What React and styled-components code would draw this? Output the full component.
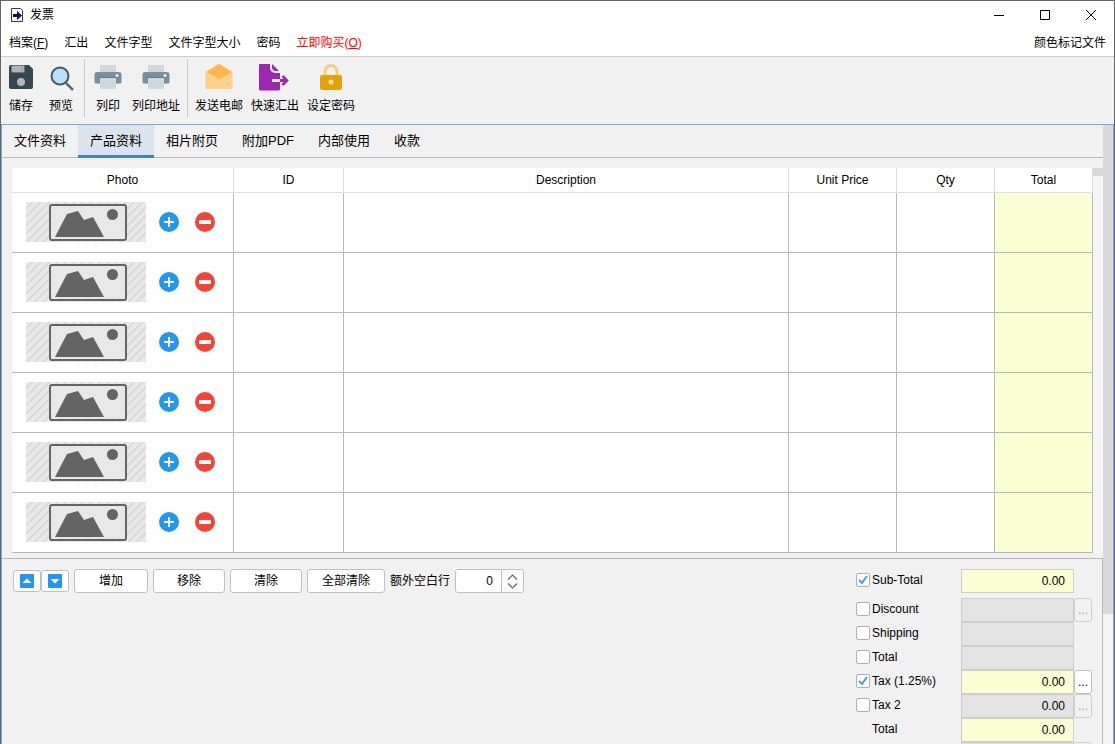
import React, { useState } from "react";
import styled, { createGlobalStyle } from "styled-components";

const MENUS = [
  { text: "档案", hotkey: "F" },
  { text: "汇出" },
  { text: "文件字型" },
  { text: "文件字型大小" },
  { text: "密码" },
  { text: "立即购买", hotkey: "O", highlight: true },
];

const TABS = ["文件资料", "产品资料", "相片附页", "附加PDF", "内部使用", "收款"];

const COLUMNS = [
  { name: "Photo", width: "222px" },
  { name: "ID", width: "110px" },
  { name: "Description" },
  { name: "Unit Price", width: "108px" },
  { name: "Qty", width: "98px" },
  { name: "Total", width: "98px" },
];

const TOTALS = [
  { id: "subtotal", label: "Sub-Total", check: true, checked: true, value: "0.00", active: true },
  { id: "discount", label: "Discount", check: true, value: "", more: true },
  { id: "shipping", label: "Shipping", check: true, value: "" },
  { id: "total1", label: "Total", check: true, value: "" },
  { id: "tax1", label: "Tax (1.25%)", check: true, checked: true, value: "0.00", active: true, more: true },
  { id: "tax2", label: "Tax 2", check: true, value: "0.00", more: true },
  { id: "total2", label: "Total", value: "0.00", active: true },
  { id: "deposit", label: "", value: "", more: true },
];

const AppIcon = () => (
  <svg width="14" height="16" viewBox="0 0 14 16">
    <path d="M1.5 1.5h9l2 2v11h-11z" fill="#fff" stroke="#33336b" />
    <path d="M2 9h10v5H2z" fill="#fbf7c4" />
    <path d="M3 7h4V4l5 4.500-5 4.500v-3H3z" fill="#0b0b5e" />
  </svg>
);

const SaveIcon = () => (
  <svg width="28" height="28" viewBox="0 0 28 28">
    <path d="M4 2h18l4 4v18a2 2 0 0 1-2 2H4a2 2 0 0 1-2-2V4a2 2 0 0 1 2-2z" fill="#37474f" />
    <path d="M4 2h14v8H6a2 2 0 0 1-2-2z" fill="#26343a" />
    <path d="M4.500 2.500h13v7h-13z" fill="#b0b4b6" />
    <path d="M14 4h2v4h-2z" fill="#9da3a6" />
    <circle cx="14" cy="19" r="4" fill="#b4b7b9" />
  </svg>
);

const PreviewIcon = () => (
  <svg width="28" height="28" viewBox="0 0 28 28">
    <path d="M19 20l7 7" stroke="#546e7a" strokeWidth="2.500" />
    <circle cx="13" cy="13" r="8.500" fill="#bbdefb" stroke="#455a64" strokeWidth="2" />
  </svg>
);

const PrintIcon = () => (
  <svg width="28" height="28" viewBox="0 0 28 28">
    <path d="M6 2h16v8H6z" fill="#cfd8dc" />
    <path d="M3 9h22a2.500 2.500 0 0 1 2.500 2.500V19a1.500 1.500 0 0 1-1.500 1.500H2A1.500 1.500 0 0 1 .5 19v-7.500A2.500 2.500 0 0 1 3 9z" fill="#78909c" />
    <circle cx="23" cy="12.500" r="1.500" fill="#e8f0f3" />
    <path d="M6 15h16v11H6z" fill="#cfd8dc" />
    <path d="M5 14h18v1H5z" fill="#607d8b" />
  </svg>
);

const MailIcon = () => (
  <svg width="28" height="28" viewBox="0 0 28 28">
    <path d="M.5 9L14 1l13.500 8v15a2 2 0 0 1-2 2h-23a2 2 0 0 1-2-2z" fill="#ffd08a" />
    <path d="M14 1l13 8-13 7L1 9z" fill="#ffb74d" />
  </svg>
);

const ExportIcon = () => (
  <svg width="32" height="28" viewBox="0 0 32 28">
    <path d="M1 1h10v4a5 5 0 0 0 5 5h5v6h-8v3h8v7a1.500 1.500 0 0 1-1.500 1.500h-18A1.500 1.500 0 0 1 0 26V2a1 1 0 0 1 1-1z" fill="#9c27b0" />
    <path d="M13 1l7 7h-3a4 4 0 0 1-4-4z" fill="#9c27b0" />
    <path d="M21 17.500h6" stroke="#9c27b0" strokeWidth="3" />
    <path d="M23.500 13l4.500 4.500-4.500 4.500" fill="none" stroke="#9c27b0" strokeWidth="2.500" />
  </svg>
);

const LockIcon = () => (
  <svg width="28" height="28" viewBox="0 0 28 28">
    <path d="M8 13V8.500a6 6 0 0 1 12 0V13" fill="none" stroke="#f3d07c" strokeWidth="3" />
    <path d="M5 12h18a2 2 0 0 1 2 2v11a2 2 0 0 1-2 2H5a2 2 0 0 1-2-2V14a2 2 0 0 1 2-2z" fill="#e2a20c" />
    <circle cx="14" cy="19" r="2.500" fill="#f3dfae" />
  </svg>
);

const PhotoPlaceholder = () => (
  <svg width="78" height="38" viewBox="0 0 78 38">
    <rect x="1" y="2" width="76" height="35" rx="2" fill="#e8e8e8" stroke="#646464" strokeWidth="2" />
    <path d="M6 34L18 11l11-3 6 9 9-3 11 20z" fill="#646464" />
    <circle cx="63.500" cy="11.500" r="5.500" fill="#646464" />
  </svg>
);

const AddIcon = () => (
  <svg width="20" height="20" viewBox="0 0 20 20">
    <circle cx="10" cy="10" r="10" fill="#2196f3" />
    <path d="M5 10h10M10 5v10" stroke="#fff" strokeWidth="2" />
  </svg>
);

const RemoveIcon = () => (
  <svg width="20" height="20" viewBox="0 0 20 20">
    <circle cx="10" cy="10" r="10" fill="#f44336" />
    <path d="M4 10h12" stroke="#fff" strokeWidth="4" />
  </svg>
);

const MoveIcon = ({ down }) => (
  <svg width="14" height="14" viewBox="0 0 14 14">
    <rect width="14" height="14" rx="1" fill="#2196f3" />
    <path d={down ? "M2.500 5h9L7 9.500z" : "M2.500 9h9L7 4.500z"} fill="#fff" />
  </svg>
);

const TOOLS = [
  [
    { label: "储存", icon: <SaveIcon /> },
    { label: "预览", icon: <PreviewIcon /> },
  ],
  [
    { label: "列印", icon: <PrintIcon /> },
    { label: "列印地址", icon: <PrintIcon /> },
  ],
  [
    { label: "发送电邮", icon: <MailIcon /> },
    { label: "快速汇出", icon: <ExportIcon /> },
    { label: "设定密码", icon: <LockIcon /> },
  ],
];

const App = () => {
  const [activeTab, setActiveTab] = useState(1);
  const [extraRows, setExtraRows] = useState(0);
  const [checks, setChecks] = useState(
    Object.fromEntries(TOTALS.map((t) => [t.id, !!t.checked]))
  );

  const toggleCheck = (id) => setChecks({ ...checks, [id]: !checks[id] });

  return (
    <>
      <GlobalStyle />
      <Window>
        <TitleBar>
          <AppIcon />
          <Title>发票</Title>
          <WindowButtons>
            <WindowButton aria-label="最小化">
              <svg width="12" height="12" viewBox="0 0 12 12">
                <path d="M1 6.500h10" stroke="#000" />
              </svg>
            </WindowButton>
            <WindowButton aria-label="最大化">
              <svg width="12" height="12" viewBox="0 0 12 12">
                <path d="M1.500 1.500h9v9h-9z" fill="none" stroke="#000" />
              </svg>
            </WindowButton>
            <WindowButton aria-label="关闭">
              <svg width="12" height="12" viewBox="0 0 12 12">
                <path d="M1 1l10 10M11 1L1 11" stroke="#000" />
              </svg>
            </WindowButton>
          </WindowButtons>
        </TitleBar>

        <MenuBar>
          {MENUS.map((menu) => (
            <MenuItem key={menu.text} $highlight={menu.highlight}>
              {menu.text}
              {menu.hotkey && (
                <>
                  (<u>{menu.hotkey}</u>)
                </>
              )}
            </MenuItem>
          ))}
          <MenuSpacer />
          <MenuItem>颜色标记文件</MenuItem>
        </MenuBar>

        <Toolbar>
          {TOOLS.map((group, index) => (
            <ToolGroup key={index}>
              {group.map((tool) => (
                <ToolButton key={tool.label} $wide={tool.label.length > 2}>
                  {tool.icon}
                  <span>{tool.label}</span>
                </ToolButton>
              ))}
            </ToolGroup>
          ))}
        </Toolbar>

        <Body>
          <Main>
            <TabBar>
              {TABS.map((tab, index) => (
                <Tab
                  key={tab}
                  $active={index === activeTab}
                  onClick={() => setActiveTab(index)}
                >
                  {tab}
                </Tab>
              ))}
            </TabBar>

            <TableArea>
              <Table>
                <colgroup>
                  {COLUMNS.map((col) => (
                    <Col key={col.name} $width={col.width} />
                  ))}
                </colgroup>
                <thead>
                  <tr>
                    {COLUMNS.map((col) => (
                      <HeadCell key={col.name}>{col.name}</HeadCell>
                    ))}
                  </tr>
                </thead>
                <tbody>
                  {[0, 1, 2, 3, 4, 5].map((row) => (
                    <tr key={row}>
                      <Cell>
                        <PhotoCell>
                          <Photo>
                            <PhotoPlaceholder />
                          </Photo>
                          <RoundButton aria-label="增加">
                            <AddIcon />
                          </RoundButton>
                          <RoundButton aria-label="移除">
                            <RemoveIcon />
                          </RoundButton>
                        </PhotoCell>
                      </Cell>
                      <Cell />
                      <Cell />
                      <Cell />
                      <Cell />
                      <Cell $total />
                    </tr>
                  ))}
                </tbody>
              </Table>
              <TableScroll>
                <TableThumb />
              </TableScroll>
            </TableArea>

            <BottomPanel>
              <Actions>
                <MoveButtons>
                  <MoveButton aria-label="上移">
                    <MoveIcon />
                  </MoveButton>
                  <MoveButton aria-label="下移">
                    <MoveIcon down />
                  </MoveButton>
                </MoveButtons>
                <Button $width="74px">增加</Button>
                <Button $width="72px">移除</Button>
                <Button $width="72px">清除</Button>
                <Button $width="78px">全部清除</Button>
                <label htmlFor="extra-rows">额外空白行</label>
                <Spinner>
                  <SpinnerInput
                    id="extra-rows"
                    value={extraRows}
                    onChange={(e) => setExtraRows(Number(e.target.value) || 0)}
                  />
                  <SpinnerArrows>
                    <SpinnerArrow
                      aria-label="加一"
                      onClick={() => setExtraRows(extraRows + 1)}
                    >
                      <svg width="11" height="6" viewBox="0 0 11 6">
                        <path d="M1 5.500l4.500-4.500L10 5.500" fill="none" stroke="#666" strokeWidth="1.200" />
                      </svg>
                    </SpinnerArrow>
                    <SpinnerArrow
                      aria-label="减一"
                      onClick={() => setExtraRows(Math.max(0, extraRows - 1))}
                    >
                      <svg width="11" height="6" viewBox="0 0 11 6">
                        <path d="M1 .5L5.500 5 10 .5" fill="none" stroke="#666" strokeWidth="1.200" />
                      </svg>
                    </SpinnerArrow>
                  </SpinnerArrows>
                </Spinner>
              </Actions>

              <Totals>
                {TOTALS.map((item) => (
                  <TotalRow key={item.id}>
                    <TotalLabel htmlFor={item.check ? item.id : `${item.id}-value`}>
                      {item.check ? (
                        <CheckBox
                          type="checkbox"
                          id={item.id}
                          checked={checks[item.id]}
                          onChange={() => toggleCheck(item.id)}
                        />
                      ) : (
                        <CheckSpace />
                      )}
                      {item.label}
                    </TotalLabel>
                    <TotalField
                      id={`${item.id}-value`}
                      aria-label={item.label || "Deposit"}
                      readOnly
                      value={item.value}
                      $active={item.active}
                    />
                    {item.more && (
                      <MoreButton aria-label="更多" disabled={!item.active}>
                        {item.label && "..."}
                      </MoreButton>
                    )}
                  </TotalRow>
                ))}
              </Totals>
            </BottomPanel>
          </Main>
          <PageScroll>
            <PageThumb />
          </PageScroll>
        </Body>
      </Window>
    </>
  );
};

export default App;

const GlobalStyle = createGlobalStyle`
  * {
    box-sizing: border-box;
  }

  body {
    margin: 0;
    background: #f1f1f1;
    color: #000;
    font: 12px/16px "Liberation Sans", "Noto Sans CJK SC", sans-serif;
  }

  button, input {
    margin: 0;
    padding: 0;
    font: inherit;
    color: inherit;
  }

  button {
    border: none;
    background: none;
    white-space: nowrap;
  }

  svg {
    display: block;
    flex-shrink: 0;
  }
`;

const Window = styled.div`
  height: 100vh;
  display: flex;
  flex-direction: column;
  overflow: hidden;
  border: 1px solid #666;
  border-bottom: none;
`;

const TitleBar = styled.header`
  height: 28px;
  flex-shrink: 0;
  display: flex;
  align-items: center;
  gap: 6px;
  padding-left: 9px;
  background: #fff;
`;

const Title = styled.span`
  flex: 1;
`;

const WindowButtons = styled.div`
  display: flex;
  height: 100%;
`;

const WindowButton = styled.button`
  width: 46px;
  display: flex;
  align-items: center;
  justify-content: center;
`;

const MenuBar = styled.nav`
  height: 28px;
  flex-shrink: 0;
  display: flex;
  align-items: center;
  gap: 16px;
  padding: 0 8px;
  background: #fff;
  border-bottom: 1px solid #ccc;
`;

const MenuItem = styled.button`
  color: ${({ $highlight }) => ($highlight ? "#f00" : "#000")};
`;

const MenuSpacer = styled.div`
  flex: 1;
`;

const Toolbar = styled.div`
  height: 67px;
  flex-shrink: 0;
  display: flex;
  padding: 2px 0 7px;
`;

const ToolGroup = styled.div`
  display: flex;

  & + & {
    margin-left: 3px;
    padding-left: 3px;
    border-left: 1px solid #ccc;
  }
`;

const ToolButton = styled.button`
  display: flex;
  flex-direction: column;
  align-items: center;
  gap: 7px;
  padding: 4px ${({ $wide }) => ($wide ? "4px" : "8px")} 0;

  svg {
    margin: 0 -2px;
  }
`;

const Body = styled.div`
  flex: 1;
  min-height: 0;
  display: flex;
  border: 1px solid #7da7d9;
  border-bottom: none;
`;

const Main = styled.main`
  flex: 1;
  min-width: 0;
  display: flex;
  flex-direction: column;
`;

const TabBar = styled.div`
  flex-shrink: 0;
  height: 33px;
  display: flex;
  border-bottom: 1px solid #b9b9b9;
`;

const Tab = styled.button`
  height: 33px;
  padding: 2px 12px 0;
  font-size: 13px;
  border-bottom: 3px solid ${({ $active }) => ($active ? "#3f81ca" : "transparent")};
  background: ${({ $active }) => ($active ? "#dae4ed" : "transparent")};
`;

const TableArea = styled.div`
  flex-shrink: 0;
  display: flex;
  padding: 10px 0 5px 10px;
`;

const Table = styled.table`
  flex: 1;
  table-layout: fixed;
  border-spacing: 0;
  background: #fff;
`;

const Col = styled.col`
  width: ${({ $width }) => $width || "auto"};
`;

const HeadCell = styled.th`
  height: 25px;
  padding: 0;
  font-weight: normal;
  border-right: 1px solid #e0e0e0;
  border-bottom: 1px solid #e0e0e0;
`;

const Cell = styled.td`
  height: 60px;
  padding: 0;
  border-right: 1px solid #b9b9b9;
  border-bottom: 1px solid #b9b9b9;
  background: ${({ $total }) => ($total ? "#fbfed2" : "#fff")};
`;

const PhotoCell = styled.div`
  display: flex;
  align-items: center;
  padding: 0 0 2px 14px;
`;

const Photo = styled.div`
  width: 120px;
  height: 40px;
  display: flex;
  align-items: center;
  justify-content: center;
  padding-left: 3px;
  background: repeating-linear-gradient(135deg, #e9e9e9 0 3px, #dadada 4px 5px, #e9e9e9 6px);
`;

const RoundButton = styled.button`
  margin-left: 13px;

  & + & {
    margin-left: 16px;
  }
`;

const TableScroll = styled.div`
  width: 10px;
  background: #f5f5f5;
`;

const TableThumb = styled.div`
  height: 8px;
  background: #d9d9d9;
`;

const BottomPanel = styled.section`
  flex: 1;
  min-height: 0;
  display: flex;
  justify-content: space-between;
  align-items: flex-start;
  padding: 10px 10px 0 11px;
  border-top: 1px solid #b9b9b9;
  border-right: 1px solid #b9b9b9;
  overflow: hidden;
`;

const Actions = styled.div`
  display: flex;
  align-items: center;
  gap: 5px;
`;

const MoveButtons = styled.div`
  display: flex;
`;

const Button = styled.button`
  width: ${({ $width }) => $width};
  height: 24px;
  border: 1px solid #c0c0c0;
  border-radius: 3px;
  background: #fff;
`;

const MoveButton = styled.button`
  width: 28px;
  height: 22px;
  display: flex;
  align-items: center;
  justify-content: center;
  border: 1px solid #c0c0c0;
  border-radius: 3px;
  background: #fff;
`;

const Spinner = styled.div`
  width: 69px;
  height: 24px;
  display: flex;
  border: 1px solid #c0c0c0;
  border-radius: 3px;
  background: #fff;
  overflow: hidden;
`;

const SpinnerInput = styled.input`
  flex: 1;
  min-width: 0;
  padding-right: 8px;
  border: none;
  outline: none;
  text-align: right;
`;

const SpinnerArrows = styled.div`
  width: 22px;
  display: flex;
  flex-direction: column;
  justify-content: center;
  gap: 3px;
  border-left: 1px solid #c0c0c0;
  background: #fafafa;
`;

const SpinnerArrow = styled.button`
  display: flex;
  justify-content: center;
`;

const Totals = styled.div`
  width: 236px;
`;

const TotalRow = styled.div`
  display: flex;
  height: 24px;

  &:first-child {
    margin-bottom: 5px;
  }
`;

const TotalLabel = styled.label`
  width: 105px;
  display: flex;
  align-items: center;
  gap: 2px;
  padding-bottom: 2px;
`;

const CheckBox = styled.input`
  appearance: none;
  width: 14px;
  height: 14px;
  border: 1px solid #b0b0b0;
  border-radius: 2px;
  background: #fff;

  &:checked {
    background: #fff
      url("data:image/svg+xml,%3Csvg xmlns='http://www.w3.org/2000/svg' viewBox='0 0 12 12'%3E%3Cpath d='M2 6l3 3 5-7' fill='none' stroke='%234a9be8' stroke-width='2'/%3E%3C/svg%3E");
  }
`;

const CheckSpace = styled.span`
  width: 14px;
`;

const TotalField = styled.input`
  width: 113px;
  padding-right: 8px;
  border: 1px solid #cdcdcd;
  outline: none;
  text-align: right;
  background: ${({ $active }) => ($active ? "#fbfed2" : "#e3e3e3")};
`;

const MoreButton = styled.button`
  width: 18px;
  border: 1px solid #c0c0c0;
  border-radius: 3px;
  background: #fff;

  &:disabled {
    color: #999;
    border-color: #cdcdcd;
    background: #f1f1f1;
  }
`;

const PageScroll = styled.div`
  width: 10px;
  background: #f5f5f5;
`;

const PageThumb = styled.div`
  height: 79%;
  background: #d9d9d9;
`;
